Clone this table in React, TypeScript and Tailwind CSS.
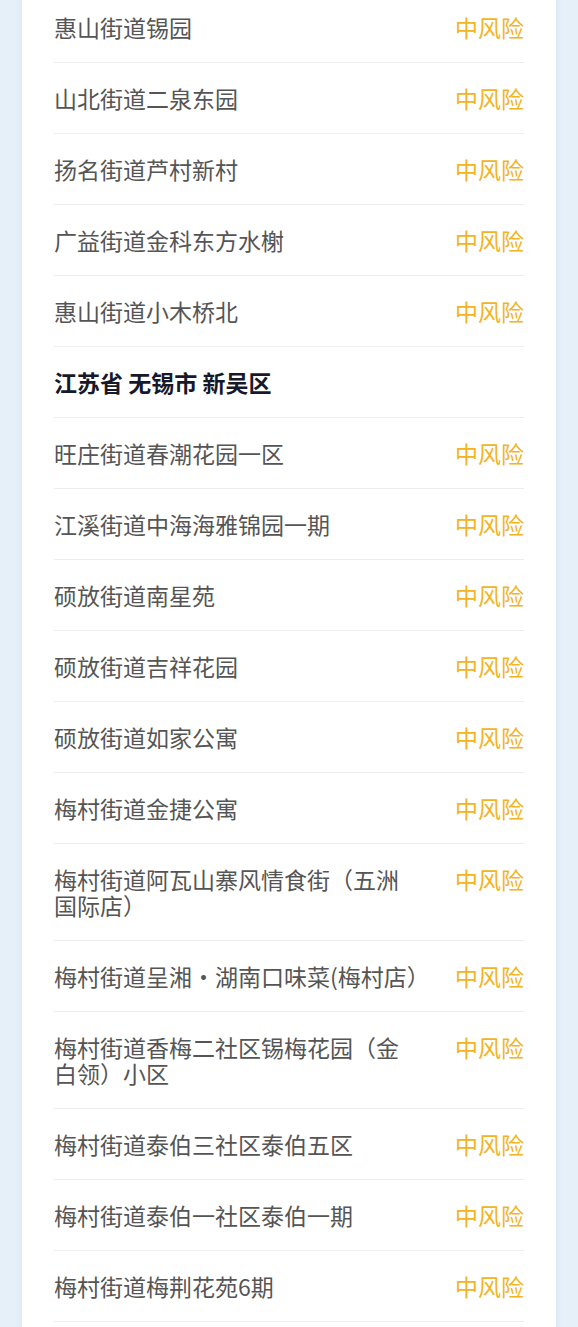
const font = { fontFamily: '"Noto Sans CJK SC", "Noto Sans", sans-serif' };

type Row = { name: string; risk?: string; header?: boolean; nowrap?: boolean };

const rows: Row[] = [
  { name: "惠山街道锡园", risk: "中风险" },
  { name: "山北街道二泉东园", risk: "中风险" },
  { name: "扬名街道芦村新村", risk: "中风险" },
  { name: "广益街道金科东方水榭", risk: "中风险" },
  { name: "惠山街道小木桥北", risk: "中风险" },
  { name: "江苏省 无锡市 新吴区", header: true },
  { name: "旺庄街道春潮花园一区", risk: "中风险" },
  { name: "江溪街道中海海雅锦园一期", risk: "中风险" },
  { name: "硕放街道南星苑", risk: "中风险" },
  { name: "硕放街道吉祥花园", risk: "中风险" },
  { name: "硕放街道如家公寓", risk: "中风险" },
  { name: "梅村街道金捷公寓", risk: "中风险" },
  { name: "梅村街道阿瓦山寨风情食街（五洲国际店）", risk: "中风险" },
  { name: "梅村街道呈湘·湖南口味菜(梅村店）", risk: "中风险", nowrap: true },
  { name: "梅村街道香梅二社区锡梅花园（金白领）小区", risk: "中风险" },
  { name: "梅村街道泰伯三社区泰伯五区", risk: "中风险" },
  { name: "梅村街道泰伯一社区泰伯一期", risk: "中风险" },
  { name: "梅村街道梅荆花苑6期", risk: "中风险" },
];

export default function App() {
  return (
    <div className="w-[578px] h-[1327px] overflow-hidden bg-[#e5f0f9]" style={font}>
      <div className="mx-[22px] -mt-[8px] bg-white px-[32px] pb-[40px] shadow-[0_0_6px_rgba(120,160,200,0.15)]">
        {rows.map((r, i) =>
          r.header ? (
            <div
              key={i}
              className="py-[22px] border-b border-[#eeeeee] text-[23px] leading-[26px] font-bold text-[#16192a]"
            >
              {r.name}
            </div>
          ) : (
            <div
              key={i}
              className="flex items-start justify-between py-[22px] border-b border-[#eeeeee] text-[23px] leading-[26px]"
            >
              <div className={r.nowrap ? "w-[367px] whitespace-nowrap text-[#555555]" : "w-[367px] text-[#555555]"}>
                {r.name}
              </div>
              <div className="text-[#f2b422]">{r.risk}</div>
            </div>
          )
        )}
      </div>
    </div>
  );
}
